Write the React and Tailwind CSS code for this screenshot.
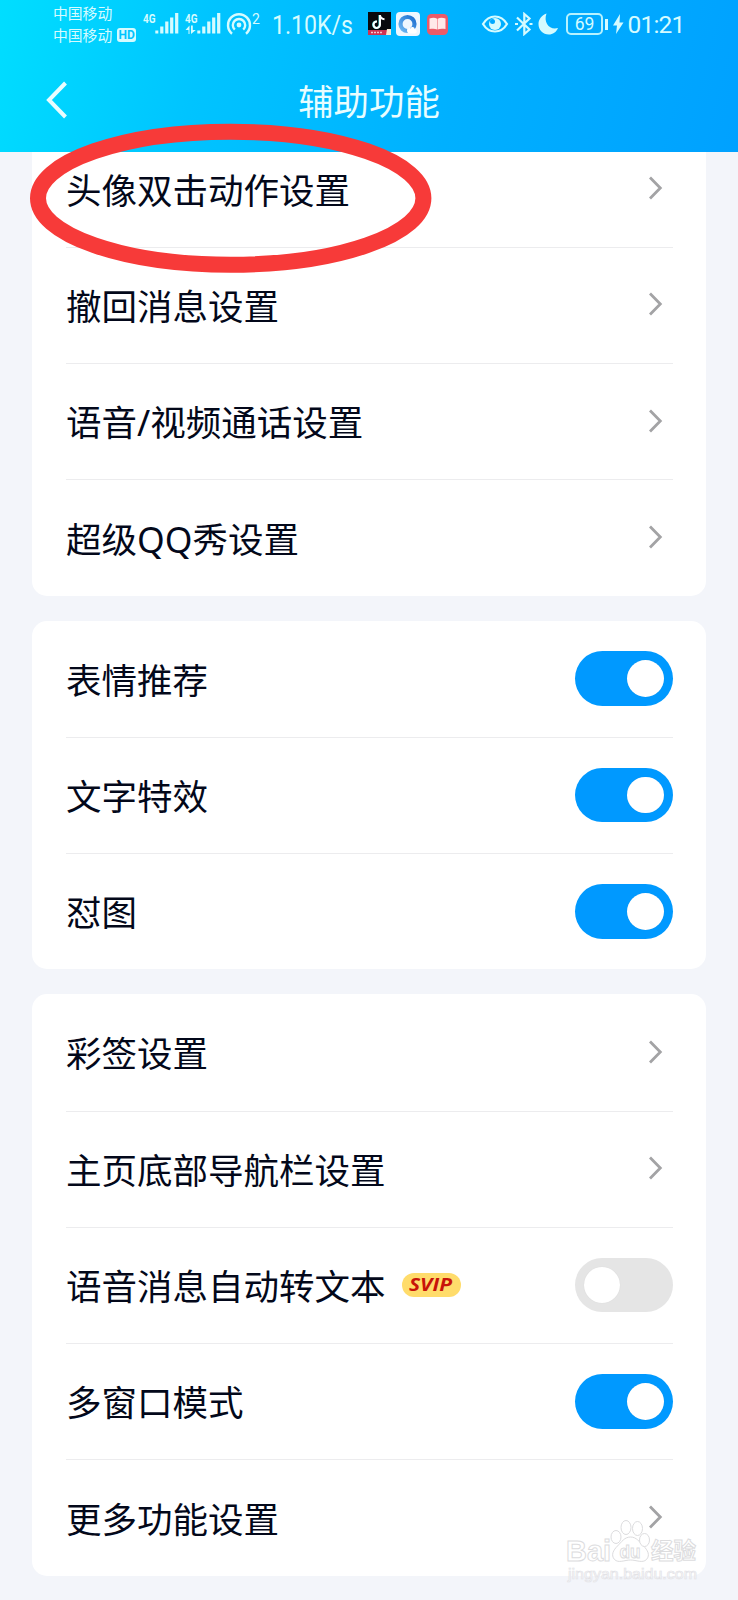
const CJK = "font-['Noto_Sans','Noto_Sans_CJK_SC',sans-serif]";

function Signal({ data }) {
  return (
    <svg width="36" height="24" viewBox="0 0 36 24" className="shrink-0 overflow-visible" fill="#d5fbff">
      <text x="0" y="10.500" fontSize="13" fontWeight="700" fontFamily="Roboto, sans-serif" textLength="12.500" lengthAdjust="spacingAndGlyphs">4G</text>
      {data && <path d="M3.500 22v-4H.500l4-4.500V22zM6 13.500h1.800V18h3L6 22z" />}
      <rect x="12.300" y="18.500" width="3" height="3" />
      <rect x="17.200" y="14.500" width="3.200" height="7" />
      <rect x="22.200" y="9.500" width="3.200" height="12" />
      <rect x="27.100" y="5.500" width="3.200" height="16" />
      <rect x="32.100" y="1" width="3.200" height="20.500" />
    </svg>
  );
}

function StatusBar() {
  return (
    <div className="flex h-12 items-center pl-[53px] text-[#d5fbff]">
      <div className="-mt-[1px] flex w-[90px] shrink-0 flex-col text-[14.800px] leading-[22px]">
        <span>中国移动</span>
        <span className="flex items-center">
          中国移动
          <span className="ml-[5px] flex h-[14px] w-[19px] items-center justify-center rounded-[3px] bg-[#d5fbff] font-['Roboto',sans-serif] text-[12px] leading-none font-bold text-[#00c4ff]">HD</span>
        </span>
      </div>
      <Signal />
      <div className="ml-[6px] flex"><Signal data /></div>
      <svg width="36" height="26" viewBox="0 0 36 26" className="ml-[5px] shrink-0 overflow-visible" fill="none" stroke="#d5fbff" strokeWidth="2.400">
        <path d="M6 22.700A11 11 0 1 1 20 22.700" />
        <path d="M8.800 18.700A6.200 6.200 0 1 1 17.200 18.700" />
        <circle cx="13" cy="14" r="2.400" fill="#d5fbff" stroke="none" />
        <text x="26" y="13" fontSize="14" fontFamily="Roboto, sans-serif" fill="#d5fbff" stroke="none">2</text>
      </svg>
      <svg width="97" height="36" viewBox="0 0 97 36" className="ml-[10px] shrink-0 overflow-visible" fill="#d5fbff">
        <text x="0" y="28" fontSize="25" fontFamily="Roboto, sans-serif" textLength="81" lengthAdjust="spacingAndGlyphs">1.10K/s</text>
      </svg>
      <svg width="24" height="24" viewBox="0 0 24 24" className="-ml-[1px] shrink-0">
        <rect width="23" height="23" fill="#09090d" />
        <path d="M11.500 3v9.500a3.200 3.200 0 1 1-3-3" fill="none" stroke="#5ee" strokeWidth="2" />
        <path d="M12 3v9.500a3.200 3.200 0 1 1-3-3M12 3.500c.5 2.500 2 3.500 4.500 3.700" fill="none" stroke="#fff" strokeWidth="2" />
        <rect y="18" width="23" height="5" fill="#cf3352" />
        <path d="M3 20.500h12" stroke="#f3c6cd" strokeWidth="1.600" strokeDasharray="2 1" />
        <path d="M18 23l1-6h4v6z" fill="#f7e6d2" />
      </svg>
      <svg width="24" height="24" viewBox="0 0 24 24" className="ml-[4px] shrink-0">
        <defs>
          <linearGradient id="ring" x1="0" y1="1" x2="1" y2="0">
            <stop offset="0" stopColor="#6db8f2" />
            <stop offset="1" stopColor="#1d6fd0" />
          </linearGradient>
        </defs>
        <rect width="24" height="24" rx="4" fill="#eef7ff" />
        <circle cx="11.500" cy="12" r="7" fill="none" stroke="url(#ring)" strokeWidth="4.200" />
        <path d="M11 18.500c0-2.500 2.300-3 3.300-2 .8-2.500 4.500-2 4.500.8 2.700.2 2.500 4.200 0 4.200H14c-2 0-3-1-3-3z" fill="#fff" />
      </svg>
      <svg width="21" height="21" viewBox="0 0 21 21" className="ml-[7px] shrink-0">
        <rect width="21" height="21" rx="4.500" fill="#ec5a68" />
        <path d="M2.500 4.500c3-1 5.500-1 7.700.2V15.500c-2-1-4.700-1-7.700-.5zM10.700 4.700C13 3.500 15.500 3.500 18.500 4.500V15c-3-.5-5.800-.5-7.800.5z" fill="#ffe9e9" />
      </svg>
      <svg width="28" height="20" viewBox="0 0 28 20" className="ml-[33px] shrink-0">
        <path d="M2 10C8 0 20 0 26 10C20 20 8 20 2 10Z" fill="none" stroke="#d5fbff" strokeWidth="2.200" />
        <circle cx="14" cy="10" r="6" fill="#d5fbff" />
        <circle cx="11.500" cy="7.500" r="2.500" fill="#00a9ff" />
      </svg>
      <svg width="18" height="24" viewBox="0 0 18 24" className="ml-[6px] shrink-0" fill="none" stroke="#d5fbff" strokeWidth="2.200">
        <path d="M2 5.500 14.500 17.500 9.300 22V2l5.200 4.500L2 18.500" />
        <path d="M0 12h3M14.500 12h3" />
      </svg>
      <svg width="22" height="24" viewBox="0 0 22 24" className="ml-[5px] shrink-0">
        <path d="M8.500 1.500C3.500 3.500 .5 7.500 .5 12c0 6 4.500 10.500 10.300 10.500 4 0 7.500-2.300 9.200-6.500C12 18.500 5 11 8.500 1.500Z" fill="#d5fbff" />
      </svg>
      <div className="ml-[6px] flex h-[22px] w-[37px] shrink-0 items-center justify-center rounded-[5px] border-2 border-[#b5f2ff] pt-[1px] font-['Roboto',sans-serif] text-[17.500px] leading-none">69</div>
      <div className="ml-[2px] h-[11px] w-[2.500px] shrink-0 bg-[#d5fbff]" />
      <svg width="11" height="20" viewBox="0 0 11 20" className="ml-[5px] shrink-0"><path d="M7 0 0 11.500h4L3 20l7.500-11.500H6.500z" fill="#d5fbff" /></svg>
      <span className="mt-[2px] ml-[4px] font-['Roboto',sans-serif] text-[24.500px] leading-none tracking-[-0.800px]">01:21</span>
    </div>
  );
}

function Switch({ on }) {
  return (
    <span
      role="switch"
      aria-checked={!!on}
      className={`-mt-[1px] flex h-[54.500px] w-[98.500px] shrink-0 items-center rounded-full pr-[9.500px] pl-[9px] ${on ? "justify-end bg-[#0099ff]" : "justify-start bg-[#e5e5e5]"}`}
    >
      <span className="size-[36.500px] rounded-full bg-white shadow-[0_0_1px_rgba(0,0,0,0.1)]" />
    </span>
  );
}

function Chevron() {
  return (
    <svg width="16" height="24" viewBox="0 0 16 24" className="mr-[9px] -mt-[2px] shrink-0" fill="none" stroke="#a3a3a5" strokeWidth="2.800">
      <path d="M2 1.500 12.300 12 2 22.500" />
    </svg>
  );
}

function Row({ label, on, badge, first }) {
  return (
    <div className={`flex h-[116.330px] items-center justify-between border-t ${first ? "border-transparent" : "border-[#ececee]"}`}>
      <div className="flex items-center">
        <span className="mt-[1px] text-[35.500px] leading-[52px] whitespace-nowrap text-[#03081a]">{label}</span>
        {badge && (
          <span className="ml-[16.500px] flex h-[24px] w-[58.500px] items-center justify-center rounded-full bg-[#ffdc6b]">
            <svg width="48" height="24" viewBox="0 0 48 24" className="overflow-visible">
              <text x="2" y="18" fontSize="17" fontWeight="700" fontStyle="italic" fontFamily="'Open Sans', sans-serif" fill="#c81409" textLength="43" lengthAdjust="spacingAndGlyphs">{badge}</text>
            </svg>
          </span>
        )}
      </div>
      {on === undefined ? <Chevron /> : <Switch on={on} />}
    </div>
  );
}

function Card({ rows }) {
  return (
    <section className="rounded-[15px] bg-white pr-[33px] pl-[34px]">
      {rows.map((row, i) => (
        <Row key={row.label} first={i === 0} {...row} />
      ))}
    </section>
  );
}

function Watermark() {
  return (
    <svg width="140" height="70" viewBox="0 0 140 70" className="absolute top-[1517px] left-[562px]" fill="#fff" stroke="#dcdcde" strokeWidth="1">
      <g fontFamily="'Liberation Sans', 'Noto Sans CJK SC', sans-serif" fontWeight="700">
        <text x="4" y="44" fontSize="30" textLength="45" lengthAdjust="spacingAndGlyphs">Bai</text>
        <path d="M68.500 20c6 0 9 5 13 9s7 9 3 13.500c-4 4-10 .5-16 .5s-12 3.500-16-.5c-4-4.500-1-9.500 3-13.500s7-9 13-9Z" />
        <ellipse cx="54" cy="20" rx="5" ry="6.500" />
        <ellipse cx="64" cy="10.500" rx="5" ry="7" />
        <ellipse cx="75.500" cy="11.500" rx="5" ry="7" />
        <ellipse cx="82.500" cy="23" rx="5" ry="6.500" />
        <text x="57.500" y="41" fontSize="19" textLength="21" lengthAdjust="spacingAndGlyphs">du</text>
        <text x="89" y="42" fontSize="23" textLength="45" lengthAdjust="spacingAndGlyphs">经验</text>
      </g>
      <text x="6" y="62" fontSize="15" strokeWidth="0.700" stroke="#e2e2e6" fontFamily="'Liberation Sans', sans-serif" textLength="129" lengthAdjust="spacingAndGlyphs">jingyan.baidu.com</text>
    </svg>
  );
}

export default function App() {
  return (
    <div className={`relative h-[1600px] w-[738px] overflow-hidden bg-[#f3f5fa] ${CJK}`}>
      <header className="relative z-10 h-[152px] bg-[linear-gradient(105deg,#00deff_0%,#00c4ff_28%,#00b0ff_62%,#00a1ff_100%)]">
        <StatusBar />
        <div className="grid h-[104px] grid-cols-[90px_1fr_90px] items-center">
          <svg width="22" height="38" viewBox="0 0 22 38" className="ml-[46px]" fill="none" stroke="#e8fdff" strokeWidth="4">
            <path d="M19.500 2 3 19l16.500 17" />
          </svg>
          <h1 className="mt-[2px] text-center text-[35.400px] leading-[52px] text-[#e8fdff]">辅助功能</h1>
        </div>
      </header>
      <main className="-mt-[21.500px] flex flex-col gap-[24.700px] pr-[32px] pl-[32px]">
        <Card rows={[{ label: "头像双击动作设置" }, { label: "撤回消息设置" }, { label: "语音/视频通话设置" }, { label: "超级QQ秀设置" }]} />
        <Card rows={[{ label: "表情推荐", on: true }, { label: "文字特效", on: true }, { label: "怼图", on: true }]} />
        <Card
          rows={[
            { label: "彩签设置" },
            { label: "主页底部导航栏设置" },
            { label: "语音消息自动转文本", badge: "SVIP", on: false },
            { label: "多窗口模式", on: true },
            { label: "更多功能设置" },
          ]}
        />
      </main>
      <svg width="404" height="152" viewBox="0 0 404 152" className="absolute top-[122px] left-[29px] z-20" fill="none">
        <ellipse cx="201.700" cy="76.200" rx="192.700" ry="66.500" stroke="#f73a39" strokeWidth="16" />
      </svg>
      <Watermark />
    </div>
  );
}
